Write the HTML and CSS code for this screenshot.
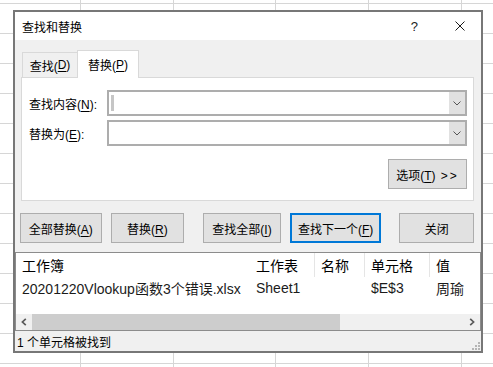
FILE: index.html
```html
<!DOCTYPE html>
<html lang="zh-CN">
<head>
    <meta charset="UTF-8">
    <title>查找和替换</title>
    <link rel="stylesheet" href="styles.css">
</head>
<body>
    <!-- Worksheet behind the dialog -->
    <div class="sheet">
        <div class="col col-a"></div>
        <div class="col col-b"></div>
        <div class="col col-c"></div>
        <div class="col col-d"></div>
        <div class="col col-e"></div>
        <div class="col col-f"></div>
    </div>

    <div class="dialog">
        <!-- Title Bar -->
        <div class="titlebar">
            <span class="title">查找和替换</span>
            <span class="help">?</span>
            <svg class="close" width="10" height="10" viewBox="0 0 10 10">
                <path d="M0.5 0.5 9.5 9.5 M9.5 0.5 0.5 9.5" stroke="#1a1a1a" stroke-width="1" fill="none"/>
            </svg>
        </div>

        <div class="dialog-body">
            <!-- Tabs -->
            <div class="tabs">
                <div class="tab">查找(<u>D</u>)</div>
                <div class="tab active">替换(<u>P</u>)</div>
            </div>

            <div class="panel">
                <div class="field">
                    <label>查找内容(<u>N</u>):</label>
                    <div class="combo">
                        <span class="caret"></span>
                        <span class="drop">
                            <svg width="8" height="5" viewBox="0 0 8 5"><path d="M0.5 0.5 4 4 7.5 0.5" fill="none" stroke="#555" stroke-width="1"/></svg>
                        </span>
                    </div>
                </div>
                <div class="field">
                    <label>替换为(<u>E</u>):</label>
                    <div class="combo">
                        <span class="drop">
                            <svg width="8" height="5" viewBox="0 0 8 5"><path d="M0.5 0.5 4 4 7.5 0.5" fill="none" stroke="#555" stroke-width="1"/></svg>
                        </span>
                    </div>
                </div>
                <div class="panel-foot">
                    <button class="btn btn-options">选项(<u>T</u>) <span class="chev">&gt;&gt;</span></button>
                </div>
            </div>

            <!-- Action Buttons -->
            <div class="actions">
                <button class="btn btn-all">全部替换(<u>A</u>)</button>
                <button class="btn btn-replace">替换(<u>R</u>)</button>
                <button class="btn btn-findall">查找全部(<u>I</u>)</button>
                <button class="btn btn-next">查找下一个(<u>F</u>)</button>
                <button class="btn btn-close">关闭</button>
            </div>
        </div>

        <!-- Results List -->
        <div class="results">
            <div class="results-row results-head">
                <span class="cell">工作簿</span>
                <span class="cell">工作表</span>
                <span class="cell sep">名称</span>
                <span class="cell sep">单元格</span>
                <span class="cell sep">值</span>
            </div>
            <div class="results-row results-data">
                <span class="cell">20201220Vlookup函数3个错误.xlsx</span>
                <span class="cell">Sheet1</span>
                <span class="cell"></span>
                <span class="cell">$E$3</span>
                <span class="cell">周瑜</span>
            </div>
            <div class="spacer"></div>
            <div class="hscroll">
                <span class="arrow">
                    <svg width="6" height="8" viewBox="0 0 6 8"><path d="M4.8 0.8 1.4 4 4.8 7.2" fill="none" stroke="#5a5a5a" stroke-width="1.7"/></svg>
                </span>
                <span class="thumb"></span>
                <span class="arrow arrow-right">
                    <svg width="6" height="8" viewBox="0 0 6 8"><path d="M1.2 0.8 4.6 4 1.2 7.2" fill="none" stroke="#5a5a5a" stroke-width="1.7"/></svg>
                </span>
            </div>
        </div>

        <!-- Status Bar -->
        <div class="status">
            1 个单元格被找到
            <svg class="grip" width="8" height="8" viewBox="0 0 8 8">
                <rect x="6" y="0" width="2" height="2" fill="#b5b5b5"/>
                <rect x="3" y="3" width="2" height="2" fill="#b5b5b5"/>
                <rect x="6" y="3" width="2" height="2" fill="#b5b5b5"/>
                <rect x="0" y="6" width="2" height="2" fill="#b5b5b5"/>
                <rect x="3" y="6" width="2" height="2" fill="#b5b5b5"/>
                <rect x="6" y="6" width="2" height="2" fill="#b5b5b5"/>
            </svg>
        </div>
    </div>
</body>
</html>
```

FILE: styles.css
```css
/* General Styling */
* {
    box-sizing: border-box;
}

body {
    margin: 0;
    font-family: "Liberation Sans", "Noto Sans CJK SC", sans-serif;
    font-size: 12px;
    color: #000;
    background-color: #fff;
    overflow: hidden;
}

u {
    text-decoration-thickness: 1px;
    text-underline-offset: 2px;
}

/* Worksheet grid */
.sheet {
    display: flex;
    height: 100vh;
    background: repeating-linear-gradient(to bottom, transparent 0 3px, #d6d6d6 3px 4px, transparent 4px 30px);
}

.col {
    flex: none;
    border-right: 1px solid #d6d6d6;
}

.col-a { width: 81px; }
.col-b { width: 93px; }
.col-c { width: 102px; }
.col-d { width: 93px; }
.col-e { width: 93px; }

.col-f {
    flex: 1;
    border-right: none;
}

/* Dialog window */
.dialog {
    position: absolute;
    left: 13px;
    top: 10px;
    width: 470px;
    height: 343px;
    border: 2px solid #777;
    background-color: #f0f0f0;
    display: flex;
    flex-direction: column;
}

.titlebar {
    height: 28px;
    background-color: #fff;
    display: flex;
    align-items: center;
    padding: 0 16px 0 7px;
}

.help {
    margin-left: auto;
    font-size: 13px;
    color: #222;
}

.close {
    margin-left: 37px;
}

.dialog-body {
    padding: 10px 7px 0 6px;
}

/* Tabs */
.tabs {
    display: flex;
    align-items: flex-end;
    height: 27px;
    padding-left: 1px;
}

.tab {
    width: 56px;
    height: 25px;
    border: 1px solid #d9d9d9;
    border-bottom: none;
    background-color: #f0f0f0;
    display: flex;
    align-items: center;
    justify-content: center;
}

.tab.active {
    width: 62px;
    height: 28px;
    margin-left: -1px;
    margin-bottom: -1px;
    background-color: #fff;
    position: relative;
    z-index: 1;
}

.panel {
    height: 124px;
    border: 1px solid #d9d9d9;
    background-color: #fff;
    padding: 12px 6px 0 0;
}

.field {
    display: flex;
    align-items: center;
    height: 26px;
}

.field + .field {
    margin-top: 4px;
}

.field label {
    width: 85px;
    padding-left: 7px;
}

.combo {
    flex: 1;
    height: 26px;
    border: 2px solid #adadad;
    background-color: #fff;
    display: flex;
    align-items: center;
}

.caret {
    width: 3px;
    height: 16px;
    margin-left: 2px;
    background-color: #c6c6c6;
}

.drop {
    margin-left: auto;
    width: 16px;
    height: 100%;
    background-color: #e1e1e1;
    display: flex;
    align-items: center;
    justify-content: center;
}

.panel-foot {
    display: flex;
    justify-content: flex-end;
    margin-top: 13px;
}

/* Buttons */
.btn {
    height: 30px;
    padding: 0;
    font: inherit;
    color: #000;
    background-color: #e1e1e1;
    border: 1px solid #adadad;
}

.btn-options { width: 79px; }

.chev {
    letter-spacing: 2px;
    margin-left: 2px;
}

.actions {
    display: flex;
    margin-top: 12px;
    margin-left: -1px;
}

.btn-all { width: 82px; }
.btn-replace { width: 74px; margin-left: 9px; }
.btn-findall { width: 78px; margin-left: 19px; }
.btn-next { width: 92px; margin-left: 9px; border: 2px solid #0078d7; }
.btn-close { width: 75px; margin-left: 18px; }

/* Results list */
.results {
    margin-top: 9px;
    height: 79px;
    border: 1px solid #8c8c8c;
    background-color: #fff;
    display: flex;
    flex-direction: column;
}

.results-row {
    display: grid;
    grid-template-columns: 233px 65px 50px 65px 1fr;
    align-items: stretch;
}

.results-row .cell {
    display: flex;
    align-items: center;
    padding-left: 7px;
    white-space: nowrap;
}

.results-row .cell:first-child {
    padding-left: 6px;
}

.results-head {
    height: 24px;
    font-size: 14px;
}

.results-head .sep {
    border-left: 1px solid #e5e5e5;
    padding-left: 6px;
}

.results-data {
    height: 22px;
    font-size: 14px;
    color: #1b1b1b;
}

.spacer {
    flex: 1;
}

.hscroll {
    height: 16px;
    display: flex;
    background-color: #f0f0f0;
}

.arrow {
    width: 16px;
    display: flex;
    align-items: center;
    justify-content: center;
}

.thumb {
    width: 308px;
    background-color: #cdcdcd;
}

.arrow-right {
    margin-left: auto;
}

/* Status bar */
.status {
    flex: 1;
    display: flex;
    align-items: center;
    padding-left: 2px;
    position: relative;
}

.grip {
    position: absolute;
    right: 1px;
    bottom: 1px;
}
```
